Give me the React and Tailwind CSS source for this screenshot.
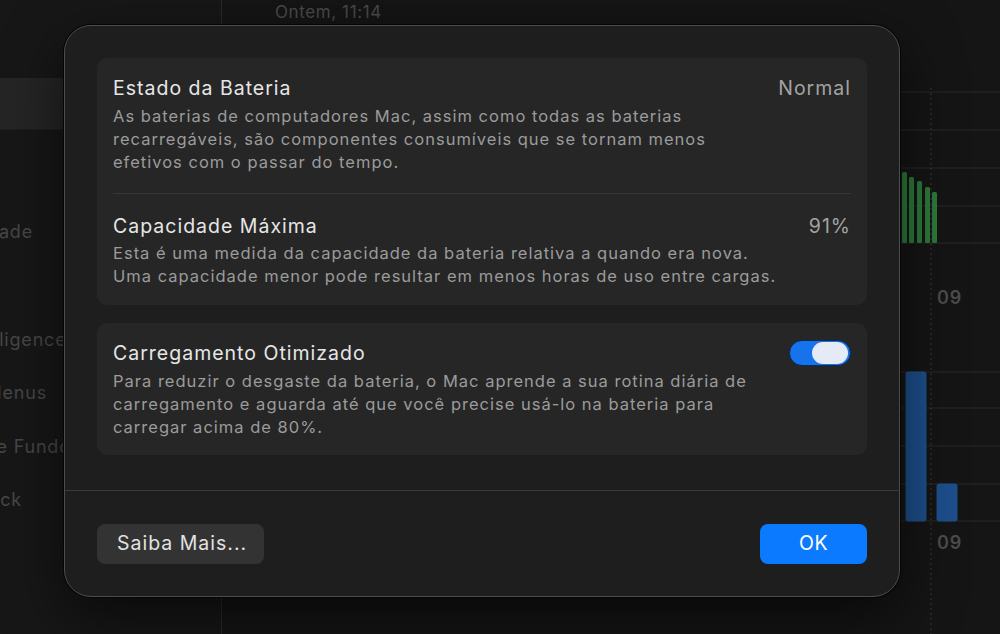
import React, { useState } from "react";

const greenBars = [
  { x: 894, top: 168 },
  { x: 902, top: 172 },
  { x: 909, top: 177 },
  { x: 917, top: 181 },
  { x: 925, top: 187 },
  { x: 932, top: 192 },
];

const UsageChart = () => {
  // coordinates are page coordinates shifted by the sidebar width (222) and header (25)
  const ox = 222;
  const oy = 25;
  const greenLines = [92, 130, 168, 206, 243];
  const blueLines = [372, 408, 446, 484, 521];
  return (
    <svg width="778" height="609" className="block">
      {greenLines.map((y) => (
        <line key={y} x1="0" x2="778" y1={y - oy} y2={y - oy} stroke="#2a2a2a" strokeWidth="1" />
      ))}
      {blueLines.map((y) => (
        <line key={y} x1="0" x2="778" y1={y - oy} y2={y - oy} stroke="#2a2a2a" strokeWidth="1" />
      ))}
      <line x1={931 - ox} x2={931 - ox} y1={88 - oy} y2={609} stroke="#3a3a3a" strokeWidth="1" strokeDasharray="2 3" />
      {greenBars.map((b) => (
        <rect key={b.x} x={b.x - ox} y={b.top - oy} width="5" height={243 - b.top} rx="1.5" fill="#2e7a3b" />
      ))}
      <rect x={905.5 - ox} y={371.5 - oy} width="21" height={150} rx="3" fill="#1d4f8c" />
      <rect x={936.5 - ox} y={483.5 - oy} width="21" height={38} rx="3" fill="#1d4f8c" />
      <text x={937 - ox} y={304 - oy} fill="#4c4c4c" fontSize="18" fontWeight="600" letterSpacing="1" fontFamily="Inter, sans-serif">
        09
      </text>
      <text x={937 - ox} y={549 - oy} fill="#4c4c4c" fontSize="18" fontWeight="600" letterSpacing="1" fontFamily="Inter, sans-serif">
        09
      </text>
    </svg>
  );
};

const Toggle = ({ on, onChange }) => (
  <button
    onClick={() => onChange(!on)}
    className={`w-[62px] h-[26px] rounded-full border border-[#0b2a55] p-[2px] flex items-center ${
      on ? "bg-[#1673ec] justify-end" : "bg-[#3a3a3a] justify-start"
    }`}
  >
    <span className="block w-[36px] h-[22px] rounded-full bg-[#e4ebf7]" />
  </button>
);

const App = () => {
  const [optimized, setOptimized] = useState(true);

  return (
    <div className="relative w-[1000px] h-[634px] overflow-hidden bg-[#151515] font-['Inter','Noto_Sans',sans-serif]">
      <div className="flex h-full">
        {/* sidebar behind the sheet */}
        <div className="w-[222px] h-full bg-[#171717] border-r border-[#2a2a2a] pt-[78px] text-[18px] tracking-[0.8px] text-[#474747]">
          <div className="h-[52px] bg-[#252525] border-b border-[#1e1e1e]" />
          <div className="mt-[90px] h-[24px] flex justify-end w-[33px] whitespace-nowrap leading-[24px]">
            Acessibilidade
          </div>
          <div className="mt-[84px] h-[24px] whitespace-nowrap leading-[24px] -ml-[100px]">
            Apple Intelligence e Siri
          </div>
          <div className="mt-[29px] h-[24px] flex justify-end w-[47px] whitespace-nowrap leading-[24px]">
            Barra de Menus
          </div>
          <div className="mt-[30px] h-[24px] whitespace-nowrap leading-[24px] -ml-[94px]">
            Imagem de Fundo
          </div>
          <div className="mt-[29px] h-[24px] flex justify-end w-[22px] whitespace-nowrap leading-[24px]">
            Mesa e Dock
          </div>
        </div>

        {/* main pane behind the sheet */}
        <div className="flex-1 flex flex-col">
          <div className="h-[25px] pl-[53px] text-[17px] tracking-[0.6px] leading-[25px] text-[#4a4a4a]">Ontem, 11:14</div>
          <UsageChart />
        </div>
      </div>

      {/* modal sheet */}
      <div className="absolute left-[64px] top-[25px] w-[836px] h-[572px] rounded-[27px] bg-[#1e1e1e] border border-[#4d4d4d] shadow-[0_0_0_1px_#050505,0_20px_60px_rgba(0,0,0,0.6)] flex flex-col">
        <div className="px-[32px] pt-[32px]">
          <div className="rounded-[10px] bg-[#262626] px-[16px]">
            <div className="pt-[16px] pb-[19px] border-b border-[#353535]">
              <div className="flex justify-between items-center leading-[28px] text-[19.5px] tracking-[1px]">
                <span className="text-[#e6e6e6]">Estado da Bateria</span>
                <span className="text-[#a3a3a3]">Normal</span>
              </div>
              <p className="mt-[3px] text-[16.5px] tracking-[1px] leading-[23px] text-[#9b9b9b]">
                As baterias de computadores Mac, assim como todas as baterias
                <br />
                recarregáveis, são componentes consumíveis que se tornam menos
                <br />
                efetivos com o passar do tempo.
              </p>
            </div>
            <div className="pt-[18px] pb-[17px]">
              <div className="flex justify-between items-center leading-[28px] text-[19.5px] tracking-[1px]">
                <span className="text-[#e6e6e6]">Capacidade Máxima</span>
                <span className="text-[#a3a3a3]">91%</span>
              </div>
              <p className="mt-[2px] text-[16.5px] tracking-[1px] leading-[23px] text-[#9b9b9b]">
                Esta é uma medida da capacidade da bateria relativa a quando era nova.
                <br />
                Uma capacidade menor pode resultar em menos horas de uso entre cargas.
              </p>
            </div>
          </div>

          <div className="mt-[18px] rounded-[10px] bg-[#262626] px-[16px] pt-[16px] pb-[16px]">
            <div className="flex justify-between items-center leading-[28px] text-[19.5px] tracking-[1px]">
              <span className="text-[#e6e6e6]">Carregamento Otimizado</span>
              <Toggle on={optimized} onChange={setOptimized} />
            </div>
            <p className="mt-[3px] text-[16.5px] tracking-[1px] leading-[23px] text-[#9b9b9b]">
              Para reduzir o desgaste da bateria, o Mac aprende a sua rotina diária de
              <br />
              carregamento e aguarda até que você precise usá-lo na bateria para
              <br />
              carregar acima de 80%.
            </p>
          </div>
        </div>

        <div className="mt-[35px] border-t border-[#3a3a3a]" />

        <div className="flex justify-between px-[32px] pt-[33px]">
          <button className="h-[40px] w-[167px] rounded-[8px] bg-[#333333] pl-[20px] text-left text-[19.5px] tracking-[1px] text-[#e2e2e2]">
            Saiba Mais...
          </button>
          <button className="h-[40px] w-[107px] rounded-[8px] bg-[#0b7aff] text-[19.5px] tracking-[0.5px] text-white">
            OK
          </button>
        </div>
      </div>
    </div>
  );
};

export default App;
